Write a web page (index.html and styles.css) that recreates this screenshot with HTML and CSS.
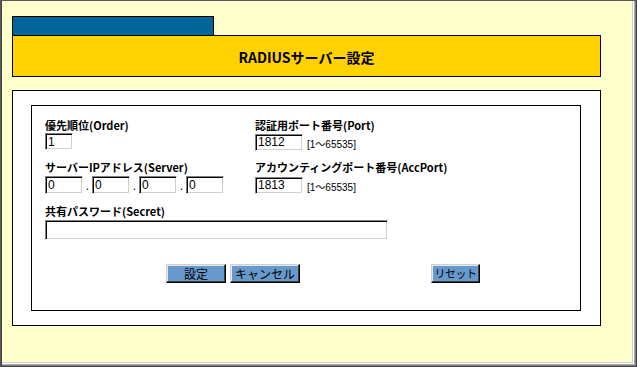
FILE: index.html
```html
<!DOCTYPE html>
<html lang="ja">
<head>
<meta charset="utf-8">
<title>RADIUSサーバー設定</title>
<link rel="stylesheet" href="styles.css">
</head>
<body>
<div class="window">
  <div class="tab"></div>
  <div class="header">RADIUSサーバー設定</div>
  <div class="outer">
    <div class="inner">
      <div class="grid">
        <div class="field">
          <div class="label">優先順位(Order)</div>
          <div class="line row1"><input class="txt w-order" type="text" value="1"></div>
        </div>
        <div class="field">
          <div class="label">認証用ポート番号(Port)</div>
          <div class="line row1"><input class="txt w-port" type="text" value="1812"><span class="range">[1～65535]</span></div>
        </div>
        <div class="field">
          <div class="label">サーバーIPアドレス(Server)</div>
          <div class="line row2">
            <input class="txt w-ip" type="text" value="0"><span class="dot">.</span><input class="txt w-ip" type="text" value="0"><span class="dot">.</span><input class="txt w-ip" type="text" value="0"><span class="dot">.</span><input class="txt w-ip" type="text" value="0">
          </div>
        </div>
        <div class="field">
          <div class="label">アカウンティングポート番号(AccPort)</div>
          <div class="line row2"><input class="txt w-port" type="text" value="1813"><span class="range">[1～65535]</span></div>
        </div>
        <div class="field wide">
          <div class="label">共有パスワード(Secret)</div>
          <div class="line row3"><input class="txt w-secret" type="password" value=""></div>
        </div>
      </div>
      <div class="buttons">
        <button class="btn b-set" type="button">設定</button>
        <button class="btn b-cancel" type="button">キャンセル</button>
        <button class="btn b-reset" type="reset">リセット</button>
      </div>
    </div>
  </div>
</div>
</body>
</html>
```

FILE: styles.css
```css
html, body {
  margin: 0;
  padding: 0;
}
body {
  width: 637px;
  height: 367px;
  overflow: hidden;
  font-family: "Noto Sans CJK JP", "Noto Sans", sans-serif;
}
.window {
  box-sizing: border-box;
  width: 637px;
  height: 367px;
  background: #ffffcc;
  padding: 16px 0 0 12px;
  box-shadow:
    inset 1px 1px #5a5a5a,
    inset 2px 0 #404040,
    inset -1px -1px #404040,
    inset -2px -2px #808080,
    inset -3px -3px #a8a8a8,
    inset -4px -4px #ffffff,
    inset -5px -5px #d0d0d0;
}
.tab {
  box-sizing: border-box;
  width: 202px;
  height: 19px;
  background: #006699;
  border: 1px solid #000;
  border-bottom: none;
}
.header {
  box-sizing: border-box;
  width: 589px;
  height: 42px;
  background: #ffd200;
  border: 1px solid #000;
  display: flex;
  align-items: center;
  justify-content: center;
  font-size: 14px;
  font-weight: bold;
  color: #000;
  padding-top: 1px;
}
.outer {
  box-sizing: border-box;
  width: 589px;
  margin-top: 13px;
  background: #fff;
  border: 1px solid #000;
  padding: 14px 19px 14px 18px;
}
.inner {
  box-sizing: border-box;
  height: 206px;
  border: 1px solid #000;
  padding: 12px 0 0 13px;
}
.grid {
  display: grid;
  grid-template-columns: 210px 1fr;
}
.wide {
  grid-column: 1 / 3;
}
.label {
  font-size: 11px;
  font-weight: bold;
  line-height: 14px;
  height: 14px;
  color: #000;
  white-space: nowrap;
}
.line {
  display: flex;
  align-items: center;
}
.row1 { margin-top: 1px; margin-bottom: 9px; }
.row2 { margin-top: 2px; margin-bottom: 10px; }
.row3 { margin-top: 2px; }
.txt {
  box-sizing: border-box;
  margin: 0;
  padding: 0 0 0 2px;
  background: #fff;
  border: 1px solid;
  border-color: #808080 #ffffff #ffffff #808080;
  box-shadow: inset 1px 1px #000, inset -1px -1px #d4d0c8;
  font-family: "Liberation Sans", Arial, sans-serif;
  font-size: 12px;
  color: #000;
  outline: none;
}
.w-order { width: 28px; height: 17px; }
.w-port { width: 48px; height: 17px; }
.w-ip { width: 38px; height: 18px; }
.w-secret { width: 343px; height: 20px; }
.dot {
  width: 9px;
  text-align: center;
  font-family: "Liberation Sans", Arial, sans-serif;
  font-size: 12px;
  align-self: flex-end;
  line-height: 16px;
}
.range {
  margin-left: 4px;
  font-family: "Liberation Sans", "Noto Sans CJK JP", sans-serif;
  font-size: 10px;
  padding-top: 3px;
}
.buttons {
  display: flex;
  margin-top: 24px;
  padding-left: 121px;
}
.btn {
  box-sizing: border-box;
  margin: 0;
  height: 19px;
  padding: 0;
  background: #6699cc;
  border: 1px solid;
  border-color: #d4d0c8 #000 #000 #d4d0c8;
  box-shadow: inset -1px -1px #404040, inset 1px 1px #e8e8e8;
  font-family: "Noto Sans CJK JP", sans-serif;
  font-size: 12px;
  line-height: 15px;
  color: #000;
  white-space: nowrap;
  overflow: hidden;
}
.b-set { width: 60px; }
.b-cancel { width: 70px; margin-left: 4px; }
.b-reset { width: 49px; margin-left: 131px; font-size: 11px; letter-spacing: -0.5px; }
```
